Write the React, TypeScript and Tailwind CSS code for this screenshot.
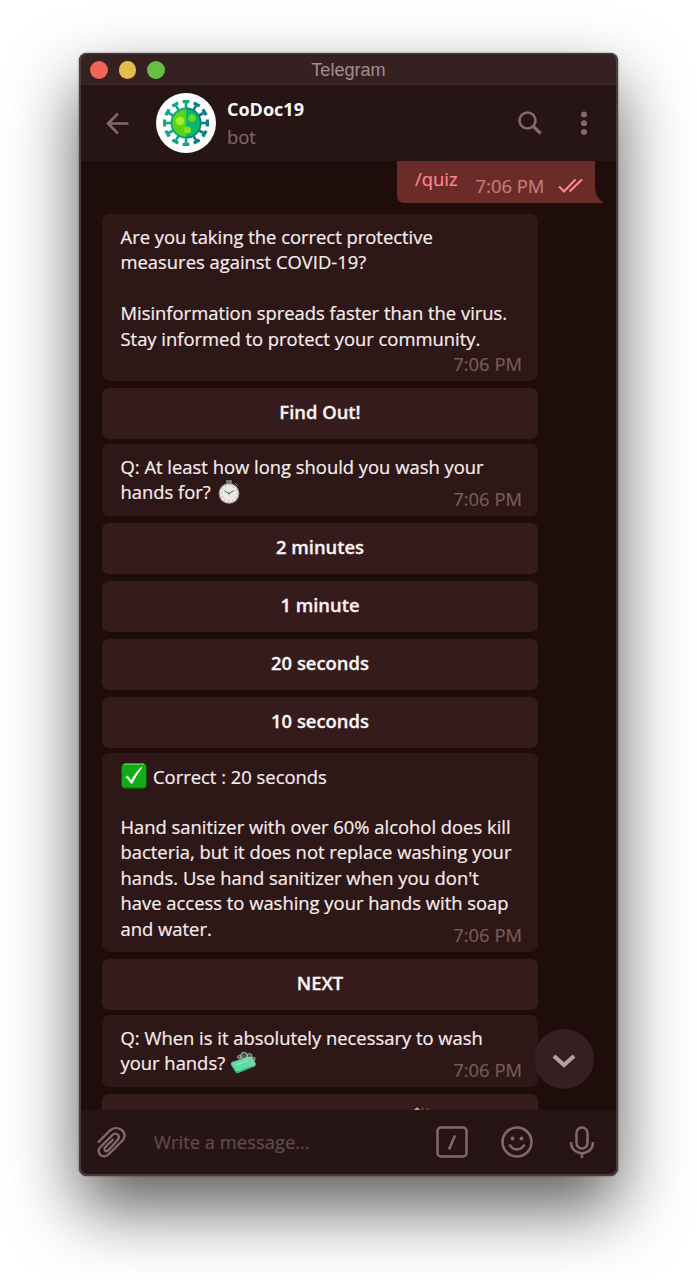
import type { ReactNode } from "react";

function VirusLogo() {
  const spikes = Array.from({ length: 12 }, (_, i) => i * 30);
  return (
    <svg viewBox="0 0 60 60" className="size-[60px] shrink-0">
      <circle cx="30" cy="30" r="30" fill="#fff" />
      {spikes.map((a) => (
        <g key={a} transform={`rotate(${a} 30 30)`} stroke={a > 0 && a < 180 ? "#087f86" : "#12a58b"} fill="none">
          <path d="M30 16V9" strokeWidth="2.600" />
          <path d="M26.600 8.600h6.800" strokeWidth="3.200" />
        </g>
      ))}
      <circle cx="30" cy="30" r="15.500" fill="#12a58b" />
      <path d="M30 14.500a15.500 15.500 0 0 1 0 31Z" fill="#087f86" />
      <circle cx="30" cy="30" r="13.500" fill="#5cd415" />
      <path d="M30 16.500a13.500 13.500 0 0 1 0 27Z" fill="#08b866" />
      <circle cx="24" cy="28" r="4.300" fill="#a5ee2e" />
      <circle cx="36" cy="25" r="3.800" fill="#62d926" />
      <circle cx="31.500" cy="37" r="3.600" fill="#82e02b" />
    </svg>
  );
}

function Stopwatch() {
  return (
    <svg viewBox="0 0 24 26" className="ml-[6px] inline-block h-[26px] w-6 align-[-6px]">
      <path d="M9.500 1.500h5v3h-5zM18 4l3 3" fill="#777" stroke="#777" strokeWidth="1" />
      <circle cx="12" cy="14.500" r="10.500" fill="#88817f" />
      <circle cx="12" cy="14.500" r="9.500" fill="#e9e8e6" />
      <circle cx="12" cy="14.500" r="7.800" fill="none" stroke="#888" strokeWidth="1.300" strokeDasharray=".6 3.484" />
      <path d="m7.500 12 4.500 2.500 5-3" fill="none" stroke="#555" strokeWidth=".9" />
      <circle cx="12" cy="14.500" r=".9" fill="#555" />
    </svg>
  );
}

function CheckEmoji() {
  return (
    <svg viewBox="0 0 26 26" className="mr-[6.5px] inline-block size-[26px] align-[-5px]">
      <rect x=".5" y=".5" width="25" height="25" rx="4" fill="#0b8f10" />
      <rect x="1" y=".5" width="24" height="23.500" rx="3.500" fill="#14ab18" />
      <path d="M3 1.200h20" stroke="#77d879" strokeWidth="1" />
      <path d="M4.500 14 6.500 12.500c1.500 1.500 2.700 3.200 3.600 5C13 12 16.500 7.500 20.500 4l.8.5C17.500 9.500 14 15 11.300 20.500H9.800c-1.300-2.500-3-4.700-5.300-6.500Z" fill="#fff" />
    </svg>
  );
}

function Soap() {
  return (
    <svg viewBox="0 0 27 24" className="ml-[5px] inline-block h-6 w-[27px] align-[-5px]">
      <path d="M2 11.500 18 6q3-1 4.500 1l3 5q1 2-1 3.500L8.500 22Q6 23 5 20.500L1 14q-.5-1.700 1-2.500Z" fill="#35b982" />
      <path d="M2 11 18 6q3-.8 4 1l2 5q.8 1.800-1.500 2.700L9 20q-3 1-4-1.500L1.300 13Q1 11.500 2 11Z" fill="#5fdba0" />
      <path d="m7 13.500 10-4" stroke="#7fe6b6" strokeWidth="2" strokeLinecap="round" />
      <g fill="#87bba6" fillOpacity=".4" stroke="#b1cec4" strokeWidth=".8">
        <circle cx="14" cy="4.500" r="3.300" />
        <circle cx="19.500" cy="5" r="2.500" />
        <circle cx="9.500" cy="6" r="1.800" />
        <circle cx="23.500" cy="8" r="1.700" />
        <circle cx="23" cy="13" r="2" />
      </g>
    </svg>
  );
}

function Time() {
  return (
    <span className="absolute right-[16px] bottom-[5px] text-[18.4px] leading-6 whitespace-nowrap text-[#7b5b5c]">7:06 PM</span>
  );
}

function Bubble({ className, children }: { className: string; children: ReactNode }) {
  return (
    <div className={`relative w-[436px] shrink-0 rounded-[7px] bg-[#2d1717] pt-[9.5px] pl-[18.5px] text-[18.4px] leading-[25.5px] whitespace-nowrap text-[#f7eeee] [-webkit-text-stroke:0.2px] ${className}`}>
      {children}
      <Time />
    </div>
  );
}

function Choice({ className, children }: { className: string; children?: ReactNode }) {
  return (
    <button className={`flex h-[51px] w-[436px] shrink-0 items-center justify-center rounded-[7px] bg-[#361b1d] pb-[3px] text-[18.4px] font-semibold text-[#fbf4f4] [-webkit-text-stroke:0.3px] ${className}`}>
      {children}
    </button>
  );
}

export default function App() {
  return (
    <main className="flex h-[1280px] w-[697px] items-start overflow-hidden bg-white pt-[53px] pl-[79px] font-['Open_Sans','Noto_Sans',sans-serif]">
      <section className="relative flex h-[1123px] w-[539px] flex-col overflow-visible rounded-[8px] shadow-[0_32px_68px_rgba(0,0,0,0.64),0_0_2px_rgba(0,0,0,0.6)]">
        <div className="flex h-full w-full flex-col overflow-hidden rounded-[8px] bg-[#1f0d0c]">
          <div className="relative flex h-8 shrink-0 items-center justify-center border-b border-[#3d2829] bg-[#362122]">
            <div className="absolute top-[8px] left-[11px] flex gap-[11px]">
              <i className="size-[17.5px] rounded-full bg-[#f0655a]" />
              <i className="size-[17.5px] rounded-full bg-[#e2bd4b]" />
              <i className="size-[17.5px] rounded-full bg-[#66c044]" />
            </div>
            <h1 className="pt-[3px] font-['Liberation_Sans',sans-serif] text-[18.1px] leading-6 text-[#a28f8f]">Telegram</h1>
          </div>
          <header className="flex h-[76px] shrink-0 items-center bg-[#271415] pr-[30px] pl-[27px]">
            <svg viewBox="0 0 24 24" className="size-6 shrink-0" fill="none" stroke="#826a6b" strokeWidth="2.600">
              <path d="M22.500 12.500H2M12 2.500l-10 10 10 10" />
            </svg>
            <div className="ml-[26px] flex"><VirusLogo /></div>
            <div className="ml-[11px] flex flex-col">
              <strong className="text-[18px] leading-7 font-bold text-[#fbf4f4]">CoDoc19</strong>
              <span className="text-[18.4px] leading-7 text-[#826263] [-webkit-text-stroke:0.2px]">bot</span>
            </div>
            <svg viewBox="0 0 24 24" className="ml-auto size-6 shrink-0" fill="none" stroke="#826a6b">
              <circle cx="9.500" cy="9.500" r="8" strokeWidth="2.600" />
              <path d="m15.500 15.500 7 7" strokeWidth="3.200" />
            </svg>
            <svg viewBox="0 0 8 24" className="ml-[38px] h-6 w-2 shrink-0" fill="#826a6b">
              <circle cx="4" cy="3.500" r="3" /><circle cx="4" cy="12.200" r="3" /><circle cx="4" cy="21" r="3" />
            </svg>
          </header>
          <div className="relative flex h-[949px] shrink-0 flex-col overflow-hidden pl-[23px]">
            <div className="relative ml-[295px] flex h-[42px] w-[198px] shrink-0 items-start rounded-bl-[7px] bg-[#6b2b29] pl-[18px] [-webkit-text-stroke:0.2px]">
              <span className="mt-[5px] text-[18.4px] leading-[26px] text-[#ff8989]">/quiz</span>
              <span className="mt-[13px] ml-[18px] text-[18.4px] leading-6 whitespace-nowrap text-[#c77b7a]">7:06 PM</span>
              <svg viewBox="0 0 25 15" className="mt-[17px] ml-[14px] h-[15px] w-[25px] shrink-0" fill="none" stroke="#ff8989" strokeWidth="2.100">
                <path d="m1 8.500 5 5L17.500 1.500M11.500 13.500 24 1.500" />
              </svg>
              <svg viewBox="0 0 10 18" className="absolute right-[-9px] bottom-0 h-[18px] w-[10px]" fill="#6b2b29">
                <path d="M0 0h1c0 8 2 13 8 17v1H0Z" />
              </svg>
            </div>
            <Bubble className="mt-[11px] h-[167px]">
              <p>Are you taking the correct protective<br />measures against COVID-19?</p>
              <p className="mt-[25.5px]">Misinformation spreads faster than the virus.<br />Stay informed to protect your community.</p>
            </Bubble>
            <Choice className="mt-[7px]">Find Out!</Choice>
            <Bubble className="mt-[5px] h-[72px]">
              <p>Q: At least how long should you wash your</p>
              <p className="h-[25.5px]">hands for?<Stopwatch /></p>
            </Bubble>
            <Choice className="mt-[7px]">2 minutes</Choice>
            <Choice className="mt-[7px]">1 minute</Choice>
            <Choice className="mt-[7px]">20 seconds</Choice>
            <Choice className="mt-[7px]">10 seconds</Choice>
            <Bubble className="mt-[5px] h-[199px]">
              <p className="h-[25.5px]"><CheckEmoji />Correct : 20 seconds</p>
              <p className="mt-[25.5px]">Hand sanitizer with over 60% alcohol does kill<br />bacteria, but it does not replace washing your<br />hands. Use hand sanitizer when you don&apos;t<br />have access to washing your hands with soap<br />and water.</p>
            </Bubble>
            <Choice className="mt-[7px]">NEXT</Choice>
            <Bubble className="mt-[5px] h-[72px]">
              <p>Q: When is it absolutely necessary to wash</p>
              <p className="h-[25.5px]">your hands?<Soap /></p>
            </Bubble>
            <div className="mt-[7px] h-[51px] w-[436px] shrink-0 rounded-[7px] bg-[#361b1d] pl-[310px]">
              <svg viewBox="0 0 18 16" className="mt-[12px] h-4 w-[18px]"><path d="m2 4 3-3 3 3Z" fill="#b9a09b" /><path d="M9 1.500h3V4H9zM14 2h3v2h-3z" fill="#792d28" /></svg>
            </div>
            <button aria-label="Scroll to bottom" className="absolute top-[868px] left-[455px] flex size-[60px] items-center justify-center rounded-full bg-[#361f20]">
              <svg viewBox="0 0 24 14" className="mt-[4px] h-[14px] w-6" fill="none" stroke="#b3a3a4" strokeWidth="4"><path d="m2 2 10 9L22 2" /></svg>
            </button>
          </div>
          <footer className="flex min-h-0 flex-1 items-center bg-[#271415] pb-[2px] pl-[18px] text-[#826a6b]">
            <svg viewBox="0 0 30 32" className="h-8 w-[30px] shrink-0" fill="none" stroke="currentColor" strokeWidth="2.400">
              <path d="M1 16.500 13 4.500C20 -2 32 6 26 14L12 28C6 34 -2 26.500 3.500 21L16 8.500C20 6 23.500 10 21 13.500L11 24.500C8.500 26.500 6.500 23.500 8 21.500L16.500 13" />
            </svg>
            <span className="ml-[27px] text-[18.4px] leading-6 whitespace-nowrap text-[#614b4c] [-webkit-text-stroke:0.2px]">Write a message...</span>
            <div className="mr-[23px] ml-auto flex items-center">
              <svg viewBox="0 0 32 32" className="size-8" fill="none" stroke="currentColor" strokeWidth="2.500"><rect x="1.500" y="1.500" width="29" height="29" rx="3.500" /><path d="m13 23.500 6-14" /></svg>
              <svg viewBox="0 0 32 32" className="ml-[33px] size-8" fill="none" stroke="currentColor" strokeWidth="2.500"><circle cx="16" cy="16" r="14.500" /><circle cx="11.500" cy="12.500" r="1.900" fill="currentColor" stroke="none" /><circle cx="20.500" cy="12.500" r="1.900" fill="currentColor" stroke="none" /><path d="M8.500 18.500c3.500 6.500 11.500 6.500 15 0" strokeWidth="2.600" /></svg>
              <svg viewBox="0 0 26 32" className="ml-[36px] h-8 w-[26px]" fill="none" stroke="currentColor" strokeWidth="2.500"><rect x="7.500" y="1.500" width="11" height="21" rx="5.500" /><path d="M2 16c0 15 22 15 22 0M13 27v5" /></svg>
            </div>
          </footer>
        </div>
        <div className="pointer-events-none absolute inset-0 rounded-[8px] border-2 border-t border-[#5a4b4d]/70" />
      </section>
    </main>
  );
}
